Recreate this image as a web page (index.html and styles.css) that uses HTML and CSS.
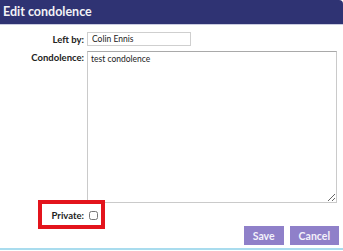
FILE: index.html
```html
<!DOCTYPE html>
<html lang="en">
<head>
    <meta charset="UTF-8">
    <meta name="viewport" content="width=device-width, initial-scale=1.0">
    <title>Edit condolence</title>
    <link rel="stylesheet" href="styles.css">
</head>
<body>
<div class="dialog">
    <header class="dialog-title">Edit condolence</header>
    <form class="condolence-form">
        <div class="row">
            <label for="left-by">Left by:</label>
            <input type="text" id="left-by" value="Colin Ennis">
        </div>
        <div class="row row-top">
            <label for="condolence">Condolence:</label>
            <textarea id="condolence">test condolence</textarea>
        </div>
        <div class="row row-private">
            <label for="private">Private:</label>
            <input type="checkbox" id="private">
            <span class="highlight"></span>
        </div>
        <div class="actions">
            <button type="button" class="btn">Save</button>
            <button type="button" class="btn">Cancel</button>
        </div>
    </form>
    <div class="bottom-line"></div>
</div>
</body>
</html>
```

FILE: styles.css
```css
body{
    margin: 0;
    padding: 0;
    background-color: #fff;
    font-family: Lato, "Liberation Sans", sans-serif;
}
.dialog{
    width: 343px;
    height: 251px;
    overflow: hidden;
}
.dialog-title{
    height: 24px;
    line-height: 24px;
    padding-left: 3px;
    background-color: #2f3373;
    color: #f2f2f6;
    font-size: 12.5px;
    font-weight: bold;
    border-bottom: 1px solid #c9cbe0;
    border-top-right-radius: 4px;
}
.condolence-form{
    padding-top: 7px;
}
.row{
    display: grid;
    grid-template-columns: 84px auto;
    column-gap: 3px;
    align-items: center;
    margin-bottom: 5px;
}
.row-top{
    align-items: start;
}
.row label{
    text-align: right;
    font-size: 9.5px;
    font-weight: bold;
    color: #222;
}
.row-top label{
    padding-top: 1px;
}
#left-by{
    width: 104px;
    height: 14px;
    box-sizing: border-box;
    border: 1px solid #cfcfcf;
    padding: 0 4px;
    font-family: inherit;
    font-size: 8.5px;
    color: #222;
    margin: 0;
}
#condolence{
    width: 250px;
    height: 152px;
    box-sizing: border-box;
    border: 1px solid #cacaca;
    border-top-color: #a9a9a9;
    padding: 2px 3px;
    font-family: inherit;
    font-size: 8.5px;
    color: #222;
    margin: 0;
    resize: both;
}
.row-private{
    position: relative;
    grid-template-columns: 84px 12px;
    margin-top: 7px;
}
#private{
    width: 9px;
    height: 9px;
    margin: 0 0 0 2px;
}
.highlight{
    position: absolute;
    left: 38px;
    top: -10px;
    width: 67px;
    height: 29px;
    box-sizing: border-box;
    border: 4px solid #e3141c;
}
.actions{
    display: flex;
    justify-content: flex-end;
    gap: 6px;
    padding-right: 4px;
    margin-top: 4px;
}
.btn{
    height: 19px;
    padding: 0 9px;
    border: none;
    background-color: #8f80c9;
    color: #f4f2fb;
    font-family: inherit;
    font-size: 10.5px;
    font-weight: bold;
}
.bottom-line{
    margin-top: 3px;
    height: 2px;
    background-color: #a9dcee;
}
```
